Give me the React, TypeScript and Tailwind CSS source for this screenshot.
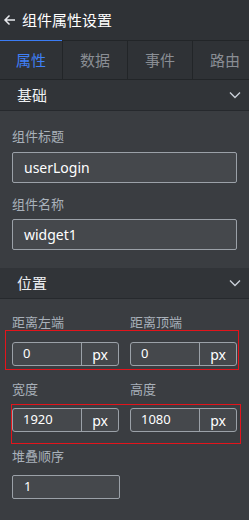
const font = { fontFamily: '"Noto Sans", "Noto Sans CJK SC", sans-serif' };

const Chevron = () => (
  <svg width="12" height="8" viewBox="0 0 12 8" fill="none" className="text-[#c9ced6]">
    <path d="M1 1.5l5 5 5-5" stroke="currentColor" strokeWidth="1.4" />
  </svg>
);

const SectionHeader = ({ title }: { title: string }) => (
  <div className="flex h-[31px] items-center justify-between border-b border-[#26292d] bg-[#313438] pl-[17px] pr-[8px]">
    <span className="text-[15px] text-[#eef0f3]">{title}</span>
    <Chevron />
  </div>
);

const Label = ({ children }: { children: string }) => (
  <div className="text-[13px] leading-[18px] text-[#a9b1ba]">{children}</div>
);

const PxInput = ({ value }: { value: string }) => (
  <div className="flex h-[24px] w-[107px] rounded-[3px] border border-[#9ba1a8] bg-[#45484c]">
    <div className="flex flex-1 items-center border-r border-[#9ba1a8] pl-[10px] text-[13px] text-white">{value}</div>
    <div className="flex w-[36px] items-center justify-center text-[14px] text-white">px</div>
  </div>
);

const App = () => {
  const tabs = ["属性", "数据", "事件", "路由"];

  return (
    <div className="h-[520px] w-[249px] overflow-hidden bg-[#3a3d41]" style={font}>
      {/* Header */}
      <div className="flex h-[40px] items-center gap-[6px] bg-[#2f3236] pl-[3px]">
        <svg width="13" height="12" viewBox="0 0 13 12" fill="none">
          <path d="M12 6H2M6.5 1.5L2 6l4.5 4.5" stroke="#e8eaee" strokeWidth="1.5" />
        </svg>
        <span className="text-[15px] text-white">组件属性设置</span>
      </div>

      {/* Tabs */}
      <div className="flex h-[40px] overflow-hidden border-b border-[#222528] bg-[#2f3236]">
        {tabs.map((t, i) => (
          <div
            key={t}
            className={
              i === 0
                ? "flex w-[62px] shrink-0 items-center justify-center border-t border-[#3b7cf4] text-[15px] text-[#3f7ff5]"
                : "flex w-[65px] shrink-0 items-center justify-center border-l border-t border-[#222528] text-[15px] text-[#8a8e94]"
            }
          >
            {t}
          </div>
        ))}
      </div>

      <SectionHeader title="基础" />

      <div className="flex flex-col px-[12px] pb-[18px] pt-[16px]">
        <Label>组件标题</Label>
        <div className="mt-[7px] flex h-[31px] items-center rounded-[2px] border border-[#9ba1a8] bg-[#45484c] pl-[11px] text-[14px] text-white">
          userLogin
        </div>
        <div className="mt-[12px]">
          <Label>组件名称</Label>
        </div>
        <div className="mt-[6px] flex h-[31px] items-center rounded-[2px] border border-[#9ba1a8] bg-[#45484c] pl-[11px] text-[14px] text-white">
          widget1
        </div>
      </div>

      <SectionHeader title="位置" />

      <div className="flex flex-col px-[12px] pt-[14px]">
        <div className="flex gap-[11px]">
          <div className="w-[107px]"><Label>距离左端</Label></div>
          <Label>距离顶端</Label>
        </div>
        <div className="relative mt-[11px] flex gap-[11px]">
          <div className="pointer-events-none absolute left-[-7px] top-[-12px] h-[40px] w-[234px] border border-[#e3141b]" />
          <PxInput value="0" />
          <PxInput value="0" />
        </div>
        <div className="mt-[14px] flex gap-[11px]">
          <div className="w-[107px]"><Label>宽度</Label></div>
          <Label>高度</Label>
        </div>
        <div className="relative mt-[10px] flex gap-[11px]">
          <div className="pointer-events-none absolute left-[-1px] top-[-4px] h-[40px] w-[230px] border border-[#e3141b]" />
          <PxInput value="1920" />
          <PxInput value="1080" />
        </div>
        <div className="mt-[15px]">
          <Label>堆叠顺序</Label>
        </div>
        <div className="mt-[10px] flex h-[24px] w-[108px] items-center rounded-[2px] border border-[#9ba1a8] bg-[#45484c] pl-[11px] text-[13px] text-white">
          1
        </div>
      </div>
    </div>
  );
};

export default App;
